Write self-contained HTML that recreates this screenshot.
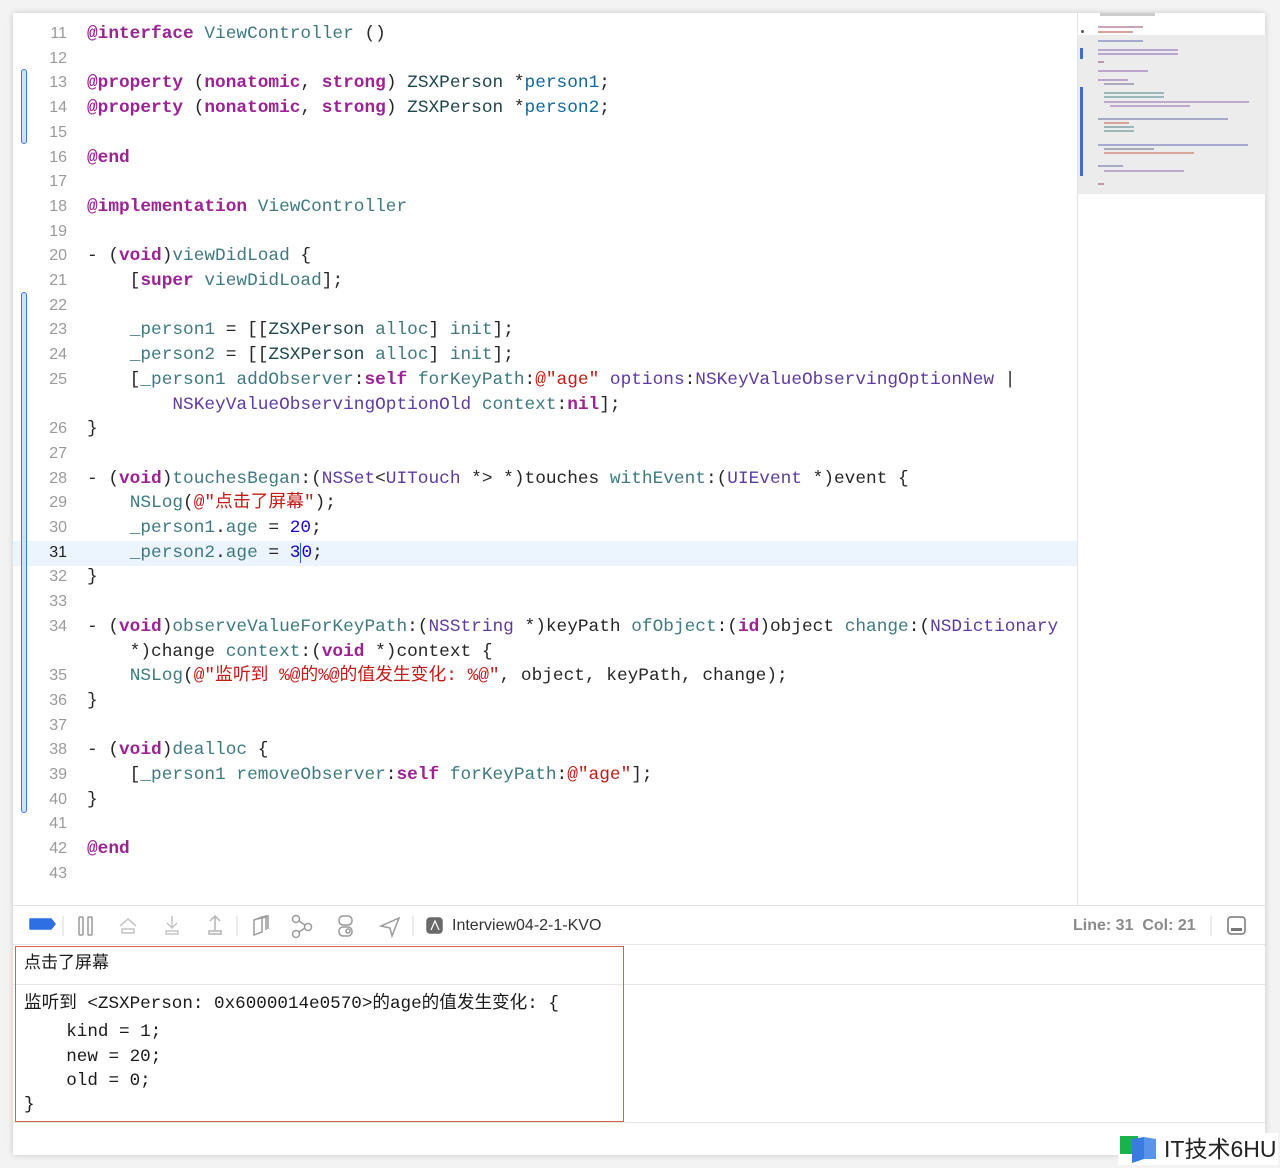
<!DOCTYPE html>
<html><head><meta charset="utf-8"><style>
*{margin:0;padding:0;box-sizing:border-box}
body{width:1280px;height:1168px;background:#f3f3f3;position:relative;overflow:hidden;font-family:"Liberation Mono","Noto Sans CJK SC",monospace}
#win{position:absolute;left:13px;top:13px;width:1252px;height:1142px;background:#fff;box-shadow:0 0 6px rgba(0,0,0,.18)}
#code{position:absolute;left:0;top:2px;width:1064px;height:890px}
.row{position:absolute;left:0;height:24.7px;line-height:24.7px;font-size:17.8px;white-space:pre;color:#262626}
.ln{position:absolute;left:0;width:54px;text-align:right;color:#9a9a9a;font-size:16px;font-family:"Liberation Sans",sans-serif}
.cd{position:absolute;left:74px}
.k{color:#9b2393;font-weight:bold}
.t{color:#3e7a80}
.v{color:#0f68a0}
.c{color:#5d3ba0}
.s{color:#c41a16}
.n{color:#1c00cf}
.d{color:#1c464a}
.bar{position:absolute;left:8px;width:6px;border:1.5px solid #3d7bd8;background:#cfe0f7;border-radius:3px}
#mini{position:absolute;left:1064px;top:0;width:188px;height:892px;border-left:1px solid #e4e4e4}
#minibg{position:absolute;left:0;top:22px;width:188px;height:159px;background:#ececec}
.mm{position:absolute;height:2px}
#tb{position:absolute;left:0;top:892px;width:1252px;height:40px;border-top:1px solid #e2e2e2;border-bottom:1px solid #e6e6e6}
.cl{position:absolute;left:11px;font-size:17.6px;white-space:pre;color:#1a1a1a;line-height:24.5px}
</style></head><body>
<div id="win">
<div id="code">
<div style="position:absolute;left:0;top:526px;width:1064px;height:25px;background:#ecf4fd"></div>
<div class="bar" style="top:54px;height:75px"></div>
<div class="bar" style="top:277px;height:521px"></div>

<div class="row" style="top:7px"><span class="ln">11</span><span class="cd"><span class="k">@interface</span> <span class="t">ViewController</span> ()</span></div>
<div class="row" style="top:31.7px"><span class="ln">12</span></div>
<div class="row" style="top:56.4px"><span class="ln">13</span><span class="cd"><span class="k">@property</span> (<span class="k">nonatomic</span>, <span class="k">strong</span>) <span class="d">ZSXPerson</span> *<span class="v">person1</span>;</span></div>
<div class="row" style="top:81.1px"><span class="ln">14</span><span class="cd"><span class="k">@property</span> (<span class="k">nonatomic</span>, <span class="k">strong</span>) <span class="d">ZSXPerson</span> *<span class="v">person2</span>;</span></div>
<div class="row" style="top:105.8px"><span class="ln">15</span></div>
<div class="row" style="top:130.5px"><span class="ln">16</span><span class="cd"><span class="k">@end</span></span></div>
<div class="row" style="top:155.2px"><span class="ln">17</span></div>
<div class="row" style="top:179.9px"><span class="ln">18</span><span class="cd"><span class="k">@implementation</span> <span class="t">ViewController</span></span></div>
<div class="row" style="top:204.6px"><span class="ln">19</span></div>
<div class="row" style="top:229.3px"><span class="ln">20</span><span class="cd">- (<span class="k">void</span>)<span class="t">viewDidLoad</span> {</span></div>
<div class="row" style="top:254px"><span class="ln">21</span><span class="cd">    [<span class="k">super</span> <span class="t">viewDidLoad</span>];</span></div>
<div class="row" style="top:278.7px"><span class="ln">22</span></div>
<div class="row" style="top:303.4px"><span class="ln">23</span><span class="cd">    <span class="t">_person1</span> = [[<span class="d">ZSXPerson</span> <span class="t">alloc</span>] <span class="t">init</span>];</span></div>
<div class="row" style="top:328.1px"><span class="ln">24</span><span class="cd">    <span class="t">_person2</span> = [[<span class="d">ZSXPerson</span> <span class="t">alloc</span>] <span class="t">init</span>];</span></div>
<div class="row" style="top:352.8px"><span class="ln">25</span><span class="cd">    [<span class="t">_person1</span> <span class="t">addObserver</span>:<span class="k">self</span> <span class="t">forKeyPath</span>:<span class="s">@"age"</span> <span class="c">options</span>:<span class="c">NSKeyValueObservingOptionNew</span> |</span></div>
<div class="row" style="top:377.5px"><span class="cd">        <span class="c">NSKeyValueObservingOptionOld</span> <span class="t">context</span>:<span class="k">nil</span>];</span></div>
<div class="row" style="top:402.2px"><span class="ln">26</span><span class="cd">}</span></div>
<div class="row" style="top:426.9px"><span class="ln">27</span></div>
<div class="row" style="top:451.6px"><span class="ln">28</span><span class="cd">- (<span class="k">void</span>)<span class="t">touchesBegan</span>:(<span class="c">NSSet</span>&lt;<span class="c">UITouch</span> *&gt; *)touches <span class="t">withEvent</span>:(<span class="c">UIEvent</span> *)event {</span></div>
<div class="row" style="top:476.3px"><span class="ln">29</span><span class="cd">    <span class="t">NSLog</span>(<span class="s">@"点击了屏幕"</span>);</span></div>
<div class="row" style="top:501px"><span class="ln">30</span><span class="cd">    <span class="t">_person1</span>.<span class="t">age</span> = <span class="n">20</span>;</span></div>
<div class="row" style="top:525.7px"><span class="ln" style="color:#222">31</span><span class="cd">    <span class="t">_person2</span>.<span class="t">age</span> = <span class="n">3<span style="border-left:1.5px solid #2a63d4">0</span></span>;</span></div>
<div class="row" style="top:550.4px"><span class="ln">32</span><span class="cd">}</span></div>
<div class="row" style="top:575.1px"><span class="ln">33</span></div>
<div class="row" style="top:599.8px"><span class="ln">34</span><span class="cd">- (<span class="k">void</span>)<span class="t">observeValueForKeyPath</span>:(<span class="c">NSString</span> *)keyPath <span class="t">ofObject</span>:(<span class="k">id</span>)object <span class="t">change</span>:(<span class="c">NSDictionary</span></span></div>
<div class="row" style="top:624.5px"><span class="cd">    *)change <span class="t">context</span>:(<span class="k">void</span> *)context {</span></div>
<div class="row" style="top:649.2px"><span class="ln">35</span><span class="cd">    <span class="t">NSLog</span>(<span class="s">@"监听到 %@的%@的值发生变化: %@"</span>, object, keyPath, change);</span></div>
<div class="row" style="top:673.9px"><span class="ln">36</span><span class="cd">}</span></div>
<div class="row" style="top:698.6px"><span class="ln">37</span></div>
<div class="row" style="top:723.3px"><span class="ln">38</span><span class="cd">- (<span class="k">void</span>)<span class="t">dealloc</span> {</span></div>
<div class="row" style="top:748px"><span class="ln">39</span><span class="cd">    [<span class="t">_person1</span> <span class="t">removeObserver</span>:<span class="k">self</span> <span class="t">forKeyPath</span>:<span class="s">@"age"</span>];</span></div>
<div class="row" style="top:772.7px"><span class="ln">40</span><span class="cd">}</span></div>
<div class="row" style="top:797.4px"><span class="ln">41</span></div>
<div class="row" style="top:822.1px"><span class="ln">42</span><span class="cd"><span class="k">@end</span></span></div>
<div class="row" style="top:846.8px"><span class="ln">43</span></div>
</div>

<div id="mini">
<div style="position:absolute;left:22px;top:0;width:55px;height:3px;background:#ccc"></div>
<div id="minibg"></div>
<div style="position:absolute;left:3px;top:17px;width:3px;height:3px;background:#555;border-radius:50%"></div>
<div style="position:absolute;left:2px;top:35px;width:3px;height:11px;background:#3d6fc2"></div>
<div style="position:absolute;left:2px;top:74px;width:3px;height:89px;background:#3d6fc2"></div>
<div class="mm" style="left:20px;top:13px;width:45px;background:#c9a3b8"></div>
<div class="mm" style="left:20px;top:18px;width:35px;background:#d7a39a"></div>
<div class="mm" style="left:20px;top:27px;width:45px;background:#a9a9cf"></div>
<div class="mm" style="left:20px;top:36px;width:80px;background:#b8a6cc"></div>
<div class="mm" style="left:20px;top:40px;width:80px;background:#b8a6cc"></div>
<div class="mm" style="left:20px;top:48px;width:6px;background:#b9a"></div>
<div class="mm" style="left:20px;top:57px;width:50px;background:#b8a6cc"></div>
<div class="mm" style="left:20px;top:66px;width:30px;background:#b8a6cc"></div>
<div class="mm" style="left:26px;top:70px;width:30px;background:#aab"></div>
<div class="mm" style="left:26px;top:79px;width:60px;background:#9ab8b8"></div>
<div class="mm" style="left:26px;top:83px;width:60px;background:#9ab8b8"></div>
<div class="mm" style="left:26px;top:88px;width:145px;background:#c0a8cc"></div>
<div class="mm" style="left:32px;top:92px;width:80px;background:#c0a8cc"></div>
<div class="mm" style="left:20px;top:105px;width:130px;background:#a8a8c8"></div>
<div class="mm" style="left:26px;top:109px;width:25px;background:#d7a39a"></div>
<div class="mm" style="left:26px;top:113px;width:30px;background:#9ab8b8"></div>
<div class="mm" style="left:26px;top:117px;width:30px;background:#9ab8b8"></div>
<div class="mm" style="left:20px;top:131px;width:150px;background:#a8a8d0"></div>
<div class="mm" style="left:26px;top:135px;width:50px;background:#aab"></div>
<div class="mm" style="left:26px;top:139px;width:90px;background:#d7a39a"></div>
<div class="mm" style="left:20px;top:152px;width:25px;background:#a8a8c8"></div>
<div class="mm" style="left:26px;top:157px;width:80px;background:#c0a8cc"></div>
<div class="mm" style="left:20px;top:170px;width:6px;background:#b9a"></div>
</div>

<div id="tb">
<svg width="1252" height="40" style="position:absolute;left:0;top:0" fill="none" stroke="#9a9a9a" stroke-width="1.5">
<path d="M17 13 h21 l4 5 l-4 5 h-21 z" fill="#2f6fe4" stroke="#2f6fe4" stroke-linejoin="round"/>
<line x1="50" y1="10" x2="50" y2="30" stroke="#e4e4e4"/>
<rect x="66" y="11" width="4" height="18" rx="1"/><rect x="75" y="11" width="4" height="18" rx="1"/>
<path d="M107 20 l8 -7 l8 7 M109 23 h12 v4 h-12 z" stroke="#c4c4c4"/>
<path d="M159 10 v12 M154 17 l5 5 l5 -5 M153 25 h12 v3 h-12 z" stroke="#c4c4c4"/>
<path d="M202 24 v-13 M197 15 l5 -5 l5 5 M196 25 h12 v3 h-12 z" stroke="#b4b4b4"/>
<line x1="224" y1="10" x2="224" y2="30" stroke="#e4e4e4"/>
<path d="M241 14 l8 -3 v15 l-8 3 z M245 13 l8 -3 v14 M249 12 l6 -2 v13"/>
<circle cx="283" cy="13" r="3.5"/><circle cx="283" cy="28" r="3.5"/><circle cx="295" cy="21" r="3.5"/><path d="M286 15 l6 4 M286 26 l6 -4"/>
<rect x="326" y="10" width="13" height="9" rx="4"/><rect x="326" y="21" width="13" height="9" rx="4"/><circle cx="335" cy="25" r="2"/>
<path d="M368 20 l18 -8 l-7 18 l-2 -8 z"/>
<line x1="400" y1="10" x2="400" y2="30" stroke="#e4e4e4"/>
<rect x="414" y="12" width="15" height="15" rx="3" fill="#6a6a6a" stroke="#6a6a6a"/>
<path d="M418 24 l4 -9 l4 9" stroke="#fff" stroke-width="1.2"/>
<line x1="1198" y1="10" x2="1198" y2="30" stroke="#e4e4e4"/>
<rect x="1215" y="11" width="17" height="17" rx="3" stroke="#777"/><rect x="1218" y="22" width="11" height="3" fill="#777" stroke="none"/>
</svg>
<div style="position:absolute;left:439px;top:0;line-height:40px;font-family:'Liberation Sans',sans-serif;font-size:16px;color:#333">Interview04-2-1-KVO</div>
<div style="position:absolute;left:1060px;top:0;line-height:40px;font-family:'Liberation Sans',sans-serif;font-size:16px;color:#8a8a8a;font-weight:bold">Line: 31&nbsp;&nbsp;Col: 21</div>
</div>

<div style="position:absolute;left:0;top:971px;width:1252px;height:1px;background:#e8e8e8"></div>
<div style="position:absolute;left:0;top:1109px;width:1252px;height:1px;background:#e8e8e8"></div>
<div style="position:absolute;left:2px;top:933px;width:609px;height:176px;border:1.5px solid #d4604f"></div>
<div class="cl" style="top:938px;font-family:'Liberation Sans','Noto Sans CJK SC',sans-serif;font-size:17px">点击了屏幕</div>
<div class="cl" style="top:979px">监听到 &lt;ZSXPerson: 0x6000014e0570&gt;的age的值发生变化: {</div>
<div class="cl" style="top:1007px">    kind = 1;</div>
<div class="cl" style="top:1031.5px">    new = 20;</div>
<div class="cl" style="top:1056px">    old = 0;</div>
<div class="cl" style="top:1080px">}</div>
</div>
<div style="position:absolute;left:1118px;top:1133px;width:160px;height:32px;background:#fff"></div>
<svg width="42" height="32" style="position:absolute;left:1118px;top:1133px"><path d="M2 3 h18 v18 h-18 z" fill="#19b24b"/><path d="M14 6 l12 -2 v22 l-12 4 z" fill="#3a7be0"/><path d="M26 4 l12 2 v20 l-12 -0 z" fill="#5a93ea"/></svg>
<div style="position:absolute;left:1164px;top:1135px;font-family:'Liberation Sans','Noto Sans CJK SC',sans-serif;font-size:23px;color:#222;line-height:28px">IT技术6HU</div>
</body></html>
